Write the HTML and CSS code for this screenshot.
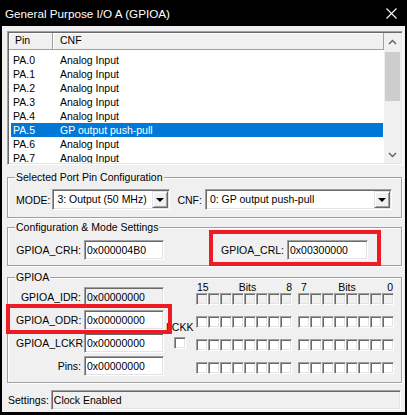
FILE: index.html
```html
<!DOCTYPE html>
<html>
<head>
<meta charset="utf-8">
<link rel="stylesheet" href="styles.css">
</head>
<body>
<div class="window">
  <div class="titlebar">
    <span class="title">General Purpose I/O A (GPIOA)</span>
    <svg class="close" width="11" height="11" viewBox="0 0 11 11"><path d="M0.5 0.5 L10.5 10.5 M10.5 0.5 L0.5 10.5" stroke="#fff" stroke-width="1.1" fill="none"/></svg>
  </div>
  <div class="client">
    <div class="list sunken">
      <div class="list-main">
        <div class="list-head">
          <div class="hcell h1">Pin</div>
          <div class="hcell h2">CNF</div>
        </div>
        <div class="rows">
          <div class="row"><span class="c1">PA.0</span><span>Analog Input</span></div>
          <div class="row"><span class="c1">PA.1</span><span>Analog Input</span></div>
          <div class="row"><span class="c1">PA.2</span><span>Analog Input</span></div>
          <div class="row"><span class="c1">PA.3</span><span>Analog Input</span></div>
          <div class="row"><span class="c1">PA.4</span><span>Analog Input</span></div>
          <div class="row sel"><span class="c1">PA.5</span><span>GP output push-pull</span></div>
          <div class="row"><span class="c1">PA.6</span><span>Analog Input</span></div>
          <div class="row"><span class="c1">PA.7</span><span>Analog Input</span></div>
        </div>
      </div>
      <div class="vscroll">
        <div class="sb-btn"><svg width="9" height="6" viewBox="0 0 9 6"><path d="M1 5 L4.5 1.5 L8 5" stroke="#606060" stroke-width="1.4" fill="none"/></svg></div>
        <div class="track"><div class="thumb"></div></div>
        <div class="sb-btn"><svg width="9" height="6" viewBox="0 0 9 6"><path d="M1 1 L4.5 4.5 L8 1" stroke="#606060" stroke-width="1.4" fill="none"/></svg></div>
      </div>
    </div>

    <fieldset class="group g1">
      <legend>Selected Port Pin Configuration</legend>
      <div class="g1-row">
        <span class="mode-lbl">MODE:</span>
        <div class="combo sunken combo-mode">
          <span class="combo-text">3: Output (50 MHz)</span>
          <span class="cbtn"><span class="tri"></span></span>
        </div>
        <span class="cnf-lbl">CNF:</span>
        <div class="combo sunken combo-cnf">
          <span class="combo-text">0: GP output push-pull</span>
          <span class="cbtn"><span class="tri"></span></span>
        </div>
      </div>
    </fieldset>

    <fieldset class="group g2">
      <legend>Configuration &amp; Mode Settings</legend>
      <div class="g2-row">
        <span class="lbl">GPIOA_CRH:</span>
        <div class="edit sunken">0x000004B0</div>
        <span class="lbl lbl-crl">GPIOA_CRL:</span>
        <div class="edit sunken edit-crl">0x00300000</div>
      </div>
    </fieldset>

    <fieldset class="group g3">
      <legend>GPIOA</legend>
      <div class="g3-body">
        <div class="regs">
          <div class="reg"><span class="lbl">GPIOA_IDR:</span><div class="edit sunken ro">0x00000000</div></div>
          <div class="reg"><span class="lbl">GPIOA_ODR:</span><div class="edit sunken">0x00000000</div></div>
          <div class="reg"><span class="lbl">GPIOA_LCKR:</span><div class="edit sunken">0x00000000</div></div>
          <div class="reg"><span class="lbl">Pins:</span><div class="edit sunken">0x00000000</div></div>
        </div>
        <div class="lckk">
          <span class="lckk-lbl">LCKK</span>
          <span class="cb"></span>
        </div>
        <div class="bits">
          <div class="bits-head">
            <div class="bh bh-hi"><span>15</span><span>Bits</span><span>8</span></div>
            <div class="bh bh-lo"><span>7</span><span>Bits</span><span>0</span></div>
          </div>
          <div class="bit-rows">
            <div class="bit-row ro">
              <div class="cbs"><span class="cb"></span><span class="cb"></span><span class="cb"></span><span class="cb"></span><span class="cb"></span><span class="cb"></span><span class="cb"></span><span class="cb"></span></div>
              <div class="cbs"><span class="cb"></span><span class="cb"></span><span class="cb"></span><span class="cb"></span><span class="cb"></span><span class="cb"></span><span class="cb"></span><span class="cb"></span></div>
            </div>
            <div class="bit-row">
              <div class="cbs"><span class="cb"></span><span class="cb"></span><span class="cb"></span><span class="cb"></span><span class="cb"></span><span class="cb"></span><span class="cb"></span><span class="cb"></span></div>
              <div class="cbs"><span class="cb"></span><span class="cb"></span><span class="cb"></span><span class="cb"></span><span class="cb"></span><span class="cb"></span><span class="cb"></span><span class="cb"></span></div>
            </div>
            <div class="bit-row">
              <div class="cbs"><span class="cb"></span><span class="cb"></span><span class="cb"></span><span class="cb"></span><span class="cb"></span><span class="cb"></span><span class="cb"></span><span class="cb"></span></div>
              <div class="cbs"><span class="cb"></span><span class="cb"></span><span class="cb"></span><span class="cb"></span><span class="cb"></span><span class="cb"></span><span class="cb"></span><span class="cb"></span></div>
            </div>
            <div class="bit-row">
              <div class="cbs"><span class="cb"></span><span class="cb"></span><span class="cb"></span><span class="cb"></span><span class="cb"></span><span class="cb"></span><span class="cb"></span><span class="cb"></span></div>
              <div class="cbs"><span class="cb"></span><span class="cb"></span><span class="cb"></span><span class="cb"></span><span class="cb"></span><span class="cb"></span><span class="cb"></span><span class="cb"></span></div>
            </div>
          </div>
        </div>
      </div>
    </fieldset>

    <div class="status">
      <span class="status-lbl">Settings:</span>
      <div class="status-field sunken">Clock Enabled</div>
    </div>
  </div>
  <div class="mark mark-crl"></div>
  <div class="mark mark-odr"></div>
</div>
</body>
</html>
```

FILE: styles.css
```css
* { box-sizing: border-box; }

body {
  margin: 0;
  background: #000;
  font-family: "Liberation Sans", Arial, sans-serif;
  font-size: 10.5px;
  color: #000;
}

.window {
  position: relative;
  width: 407px;
  height: 415px;
  background: #000;
}

.titlebar {
  height: 26px;
  display: flex;
  align-items: center;
  justify-content: space-between;
  padding: 0 10px 0 5px;
  color: #fff;
  font-size: 11.7px;
}

.close { display: block; }

.client {
  margin: 0 2px;
  height: 386px;
  background: #f0f0f0;
  padding: 5px 2px 0 5px;
}

.sunken {
  border: 1px solid;
  border-color: #a0a0a0 #fff #fff #a0a0a0;
  padding: 1px;
  box-shadow: inset 1px 1px #696969, inset -1px -1px #e3e3e3;
}

/* list */
.list {
  width: 396px;
  height: 134px;
  background: #fff;
  display: flex;
}

.list-main {
  width: 375px;
  overflow: hidden;
}

.list-head {
  height: 17px;
  display: flex;
}

.hcell {
  height: 17px;
  line-height: 15px;
  background: #f0f0f0;
  border-right: 1px solid #a0a0a0;
  border-bottom: 1px solid #a0a0a0;
  box-shadow: inset 1px 1px #fff;
}

.h1 { width: 44px; padding-left: 6px; }
.h2 { flex: 1; padding-left: 7px; }

.rows {
  padding: 3px 1px 0 2px;
}

.row {
  height: 14px;
  line-height: 14px;
  display: flex;
  white-space: nowrap;
}

.row .c1 {
  width: 49px;
  padding-left: 2px;
}

.row.sel {
  background: #0078d7;
  color: #fff;
}

.vscroll {
  width: 17px;
  display: flex;
  flex-direction: column;
  background: #f0f0f0;
}

.sb-btn {
  height: 17px;
  display: flex;
  align-items: center;
  justify-content: center;
}

.track {
  flex: 1;
  padding-top: 2px;
}

.thumb {
  width: 15px;
  height: 49px;
  margin-left: 1px;
  background: #cdcdcd;
}

/* group boxes */
.group {
  width: 395px;
  min-width: 0;
  margin: 0;
  padding: 0 0 0 8px;
  border: 1px solid #a0a0a0;
  box-shadow: inset 1px 1px #fff, 1px 1px #fff;
}

.group legend {
  padding: 0 1px;
  margin-left: -1px;
  line-height: 13px;
  background: #f0f0f0;
}

.g1 { margin-top: 6px; padding-top: 5px; padding-bottom: 7px; }
.g2 { margin-top: 3px; padding-top: 6px; padding-bottom: 5px; }
.g3 { margin-top: 5px; padding-top: 0; padding-bottom: 3px; }

.g1-row {
  display: flex;
  align-items: center;
  height: 21px;
}

.mode-lbl { margin-right: 2px; }
.cnf-lbl { margin: 0 3px 0 7px; }

.combo {
  height: 21px;
  background: #fff;
  display: flex;
  align-items: stretch;
}

.combo-mode { width: 118px; }
.combo-cnf { width: 187px; }

.combo-text {
  flex: 1;
  padding-left: 3px;
  line-height: 17px;
  white-space: nowrap;
}

.cbtn {
  width: 16px;
  background: #f0f0f0;
  border: 1px solid;
  border-color: #e3e3e3 #696969 #696969 #e3e3e3;
  box-shadow: inset 1px 1px #fff, inset -1px -1px #a0a0a0;
  display: flex;
  align-items: center;
  justify-content: center;
}

.tri {
  width: 0;
  height: 0;
  border-left: 4px solid transparent;
  border-right: 4px solid transparent;
  border-top: 4px solid #000;
  margin-top: 1px;
}

.lbl {
  width: 65px;
  margin-right: 3px;
  text-align: right;
  white-space: nowrap;
}

.edit {
  width: 80px;
  height: 20px;
  background: #fff;
  padding-left: 2px;
  line-height: 16px;
}

.edit.ro { background: #f0f0f0; }

.g2-row {
  display: flex;
  align-items: center;
  height: 20px;
}

.lbl-crl { width: 120px; }
.edit-crl { width: 81px; }

/* GPIOA group */
.g3-body {
  display: flex;
}

.regs {
  padding-top: 3px;
}

.reg {
  display: flex;
  align-items: flex-start;
  height: 23px;
}

.reg .lbl { line-height: 20px; }

.lckk {
  width: 32px;
  display: flex;
  flex-direction: column;
  padding-top: 37px;
}

.lckk-lbl {
  line-height: 12px;
  padding-left: 2px;
}

.lckk .cb {
  margin: 4px 0 0 10px;
}

.bits {
  margin-top: -3px;
}

.bits-head {
  display: flex;
  gap: 6px;
  height: 12px;
  line-height: 12px;
}

.bh {
  width: 96px;
  display: flex;
  justify-content: space-between;
}

.bh-hi { padding: 0 0 0 1px; }
.bh-lo { padding: 0 1px 0 3px; }

.bit-rows {
  display: flex;
  flex-direction: column;
  gap: 11px;
}

.bit-row {
  display: flex;
  gap: 6px;
}

.cbs {
  display: flex;
}

.cb {
  display: block;
  width: 12px;
  height: 12px;
  background: #fff;
  border: 1px solid;
  border-color: #a0a0a0 #fff #fff #a0a0a0;
  box-shadow: inset 1px 1px #696969, inset -1px -1px #e3e3e3;
}

.bit-row.ro .cb { background: #f0f0f0; }

/* status */
.status {
  display: flex;
  align-items: center;
  margin-top: 7px;
}

.status-lbl {
  margin: 0 2px 0 1px;
}

.status-field {
  width: 350px;
  height: 20px;
  background: #f0f0f0;
  padding-left: 2px;
  line-height: 16px;
}

/* annotation marks */
.mark {
  position: absolute;
  border: 4px solid #ed1c24;
}

.mark-crl { left: 209px; top: 230px; width: 172px; height: 36px; }
.mark-odr { left: 6px; top: 304px; width: 166px; height: 30px; }
```
